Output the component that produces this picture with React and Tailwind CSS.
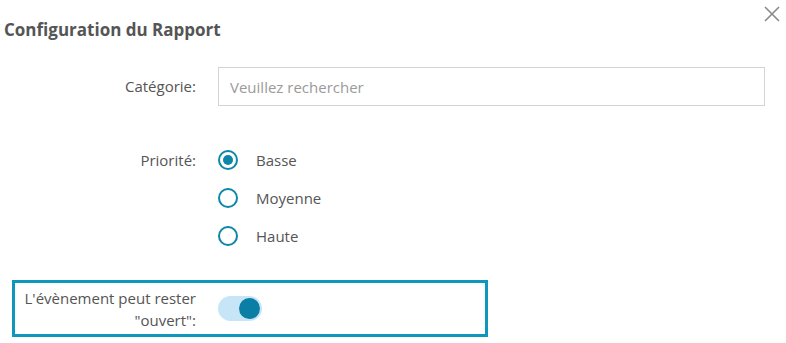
import React, { useState } from 'react';

const Radio = ({ checked, label, onClick }) => (
  <div className="flex items-center h-[38px] cursor-pointer" onClick={onClick}>
    <span className="w-[20px] h-[20px] rounded-full border-2 border-[#0c86a9] flex items-center justify-center">
      {checked && <span className="w-[10px] h-[10px] rounded-full bg-[#0c86a9]"></span>}
    </span>
    <span className="ml-[18px] text-[15px] text-[#555]">{label}</span>
  </div>
);

const App = () => {
  const [priority, setPriority] = useState('Basse');
  const [open, setOpen] = useState(true);

  return (
    <div className="w-[786px] h-[343px] bg-white relative overflow-hidden" style={{ fontFamily: '"Open Sans", sans-serif' }}>
      {/* Close button */}
      <button className="absolute right-[6px] top-[6px] text-[#8a8a8a]">
        <svg width="16" height="16" viewBox="0 0 16 16" fill="none" stroke="currentColor" strokeWidth="1.6">
          <path d="M1 1L15 15M15 1L1 15" />
        </svg>
      </button>

      {/* Header */}
      <div className="pl-[4px] pt-[18px] h-[58px]">
        <h2 className="text-[17px] font-bold text-[#555] leading-[24px]">Configuration du Rapport</h2>
      </div>

      {/* Catégorie */}
      <div className="flex items-center mt-[9px]">
        <label className="w-[196px] text-right text-[15px] text-[#555]">Catégorie:</label>
        <input
          className="ml-[22px] w-[547px] h-[39px] border border-[#d4d4d4] px-[11px] text-[15px] text-[#555] placeholder-[#9a9a9a] outline-none"
          placeholder="Veuillez rechercher"
        />
      </div>

      {/* Priorité */}
      <div className="flex mt-[35px]">
        <label className="w-[196px] text-right text-[15px] text-[#555] leading-[38px]">Priorité:</label>
        <div className="ml-[22px] flex flex-col">
          {['Basse', 'Moyenne', 'Haute'].map((p) => (
            <Radio key={p} label={p} checked={priority === p} onClick={() => setPriority(p)} />
          ))}
        </div>
      </div>

      {/* Ouvert */}
      <div className="ml-[12px] mt-[25px] w-[476px] h-[57px] border-[3px] border-[#0d97bc] flex items-center">
        <label className="w-[181px] text-right text-[15px] text-[#555] leading-[22px]">
          L'évènement peut rester
          <br />
          "ouvert":
        </label>
        <button
          onClick={() => setOpen(!open)}
          className={`ml-[22px] w-[44px] h-[25px] rounded-full flex items-center px-[2px] ${open ? 'bg-[#c6e5f6] justify-end' : 'bg-[#ddd] justify-start'}`}
        >
          <span className={`w-[21px] h-[21px] rounded-full ${open ? 'bg-[#0b7ea5]' : 'bg-white'}`}></span>
        </button>
      </div>
    </div>
  );
};

export default App;
